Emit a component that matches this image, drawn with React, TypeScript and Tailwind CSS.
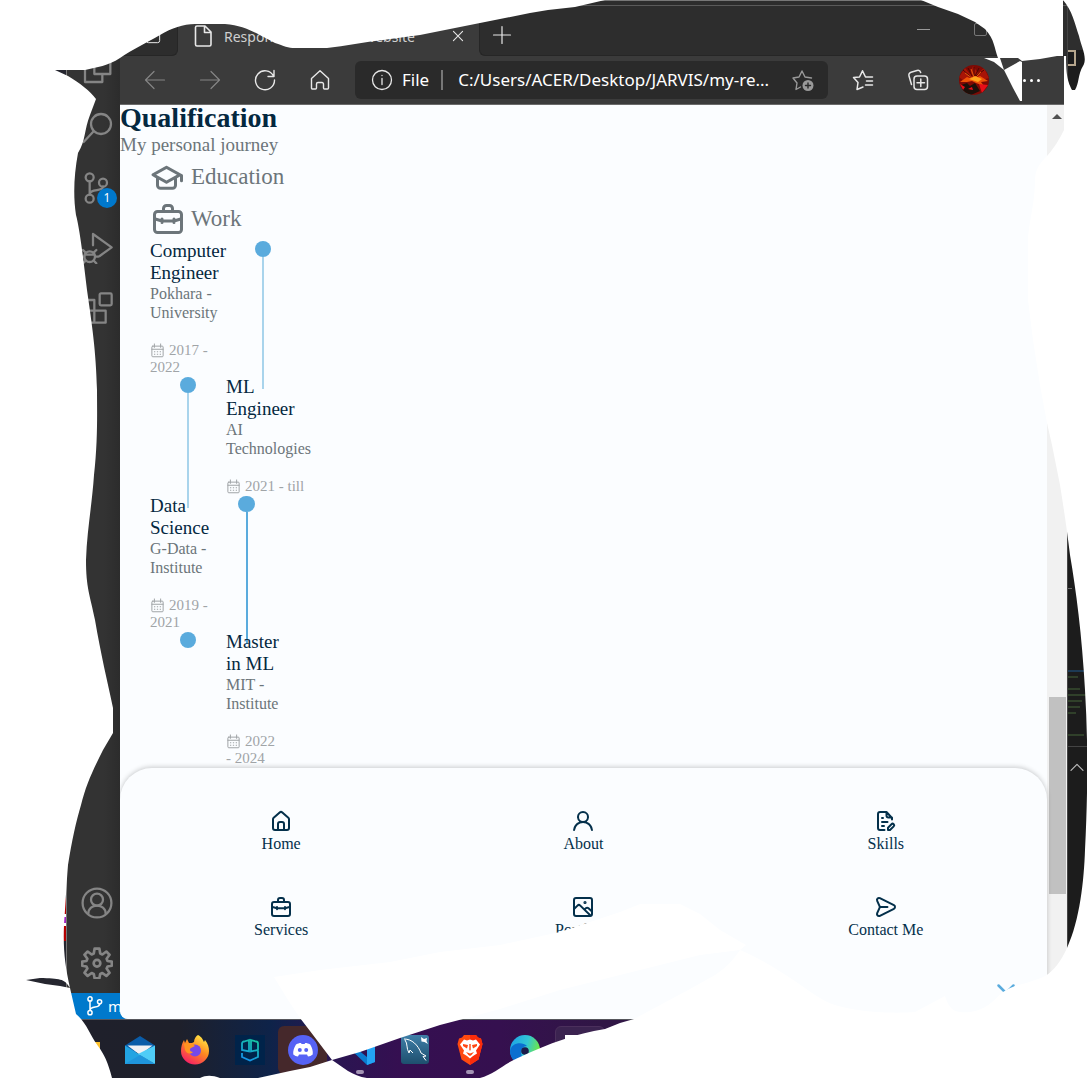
import React from "react";

type IconProps = { className?: string };

const UI_FONT = "font-['Noto_Sans',sans-serif]";

function Stroke({
  className = "size-6",
  width = 1.5,
  box = 24,
  children,
}: {
  className?: string;
  width?: number;
  box?: number;
  children: React.ReactNode;
}) {
  return (
    <svg
      viewBox={`0 0 ${box} ${box}`}
      className={`shrink-0 ${className}`}
      fill="none"
      stroke="currentColor"
      strokeWidth={width}
      strokeLinecap="round"
      strokeLinejoin="round"
      aria-hidden="true"
    >
      {children}
    </svg>
  );
}

function Solid({ className = "size-6", d }: { className?: string; d: string }) {
  return (
    <svg viewBox="0 0 24 24" className={`shrink-0 ${className}`} fill="currentColor" aria-hidden="true">
      <path d={d} />
    </svg>
  );
}

const HOME =
  "M20,8h0L14,2.74a3,3,0,0,0-4,0L4,8a3,3,0,0,0-1,2.26V19a3,3,0,0,0,3,3H18a3,3,0,0,0,3-3V10.25A3,3,0,0,0,20,8ZM14,20H10V15a1,1,0,0,1,1-1h2a1,1,0,0,1,1,1Zm5-1a1,1,0,0,1-1,1H16V15a3,3,0,0,0-3-3H11a3,3,0,0,0-3,3v5H6a1,1,0,0,1-1-1V10.25a1,1,0,0,1,.34-.75l6-5.25a1,1,0,0,1,1.32,0l6,5.25a1,1,0,0,1,.34.75Z";
const USER =
  "M15.71,12.71a6,6,0,1,0-7.42,0,10,10,0,0,0-6.22,8.18,1,1,0,0,0,2,.22,8,8,0,0,1,15.9,0,1,1,0,0,0,1,.89h.11a1,1,0,0,0,.88-1.1A10,10,0,0,0,15.71,12.71ZM12,12a4,4,0,1,1,4-4A4,4,0,0,1,12,12Z";
const SEND =
  "M20.34,9.32l-14-7a3,3,0,0,0-4.08,3.9l2.4,5.37h0a1.06,1.06,0,0,1,0,.82l-2.4,5.37A3,3,0,0,0,5,22a3.14,3.14,0,0,0,1.35-.32l14-7a3,3,0,0,0,0-5.36Zm-.89,3.57-14,7a1,1,0,0,1-1.35-1.3l2.39-5.37A2,2,0,0,0,6.57,13h6.89a1,1,0,0,0,0-2H6.57a2,2,0,0,0-.08-.22L4.1,5.41a1,1,0,0,1,1.35-1.3l14,7a1,1,0,0,1,0,1.78Z";
const CAP =
  "M21.49,10.19l-1-.55h0l-9-5h-.11a1.06,1.06,0,0,0-.19-.06l-.19,0-.18,0a1.17,1.17,0,0,0-.2.06l-.11,0-9,5a1,1,0,0,0,0,1.74L4,12.76V17.5a3,3,0,0,0,3,3h8a3,3,0,0,0,3-3V12.76l2-1.12V14.5a1,1,0,0,0,2,0V11.06A1,1,0,0,0,21.49,10.19ZM16,17.5a1,1,0,0,1-1,1H7a1,1,0,0,1-1-1V13.87l4.51,2.5.15.06.09,0a1,1,0,0,0,.25,0h0a1,1,0,0,0,.25,0l.09,0a.47.47,0,0,0,.15-.06L16,13.87Zm-5-3.14L4.06,10.5,11,6.64l6.94,3.86Z";

const Briefcase = ({ className }: IconProps) => (
  <Stroke className={className} width={2}>
    <rect x="3" y="7" width="18" height="14" rx="2" />
    <path d="M9 7V5a2 2 0 0 1 2-2h2a2 2 0 0 1 2 2v2M3.5 12l4.500 1.300h8l4.500-1.300M8 12v2.300M16 12v2.300" />
  </Stroke>
);
const Scenery = ({ className }: IconProps) => (
  <Stroke className={className} width={2}>
    <rect x="3" y="3" width="18" height="18" rx="2" />
    <path d="M3 14l3.500-3.400a2 2 0 0 1 2.800 0L19.500 20.500M13.500 14.500l1.300-1.200a2 2 0 0 1 2.700 0L21 16.500" />
    <circle cx="14" cy="7.500" r=".6" fill="currentColor" />
  </Stroke>
);
const FileEdit = ({ className }: IconProps) => (
  <Stroke className={className} width={2}>
    <path d="M10.500 21H6a2 2 0 0 1-2-2V5a2 2 0 0 1 2-2h6.500L18 9v1.500M12.500 3v3.500a2 2 0 0 0 2 2H18M8 9h1M8 13h5.500M8 17h2" />
    <path d="M14 21v-2.300l3.500-3.500a1.500 1.500 0 0 1 2.200 2.200L16 21z" />
  </Stroke>
);
const Calendar = ({ className }: IconProps) => (
  <Stroke className={className} width={1.6}>
    <path d="M4.500 5h15A1.500 1.500 0 0 1 21 6.500v14a1.500 1.500 0 0 1-1.500 1.500h-15A1.500 1.500 0 0 1 3 20.500v-14A1.500 1.500 0 0 1 4.500 5zM3 10h18M7 1.500V7M17 1.500V7M7 14h.8M11.600 14h.8M16.200 14h.8M7 18h.8M11.600 18h.8M16.200 18h.8" />
  </Stroke>
);

function IconButton({ label, className = "", children }: { label: string; className?: string; children: React.ReactNode }) {
  return (
    <button type="button" aria-label={label} className={`flex shrink-0 items-center justify-center ${className}`}>
      {children}
    </button>
  );
}

function ActivityBar() {
  return (
    <aside className="flex w-30 shrink-0 flex-col bg-[#333333]">
      <div className="flex flex-1">
        <div className="flex w-[66px] shrink-0 flex-col justify-end bg-[#25262f] pb-13">
          <div className="flex h-[43px] items-center justify-end bg-[#b40000]">
            <span className="h-3 w-0.5 border-y-3 border-white bg-[#a020c0]" />
          </div>
        </div>
        <div className="flex flex-1 flex-col items-center border-l border-[#777] bg-gradient-to-r from-[#333333] from-70% to-[#2c2c2c] pt-[50px] pl-[7px] text-[#858585]">
          <IconButton label="Explorer" className="h-10 w-11">
            <Stroke className="size-8" width={1.7}>
              <path d="M10 2h8l4 4v9H10zM10 7H3v14h13v-6" />
            </Stroke>
          </IconButton>
          <IconButton label="Search" className="mt-4 h-11 w-11">
            <Stroke className="size-8" width={1.7}>
              <circle cx="15" cy="9" r="7.500" />
              <path d="M9.500 14.500L2 22.500" />
            </Stroke>
          </IconButton>
          <button type="button" aria-label="Source control" className="relative mt-4 flex h-11 w-11 items-center justify-center">
            <Stroke className="size-8" width={1.7}>
              <circle cx="6.500" cy="4" r="3" />
              <circle cx="6.500" cy="20" r="3" />
              <circle cx="16.500" cy="8" r="3" />
              <path d="M6.500 7v10M16.500 11c0 4-10 1-10 6" />
            </Stroke>
            <span className="absolute right-0.5 bottom-0.5 flex size-5 items-center justify-center rounded-full bg-[#0078cc] font-['Noto_Sans',sans-serif] text-xs text-white">
              1
            </span>
          </button>
          <IconButton label="Run and debug" className="mt-4 h-11 w-11">
            <Stroke className="size-8" width={1.7}>
              <path d="M9 10V1.500L23 11.500l-9 6.500" />
              <circle cx="6.500" cy="18.500" r="4" />
              <path d="M3 17h7M1.500 13.500l2 2M11.500 13.500l-2 2M0 18.500h2.500M10.500 18.500H13M1.500 23.500l2-2M11.500 23.500l-2-2" />
            </Stroke>
          </IconButton>
          <IconButton label="Extensions" className="mt-4 h-11 w-11">
            <Stroke className="size-8" width={1.7}>
              <rect x="14" y="1" width="9" height="9" rx="1" />
              <path d="M2 6h8v17H2zM2 14h16.500v9H2z" />
            </Stroke>
          </IconButton>
          <div className="flex-1" />
          <IconButton label="Account" className="h-11 w-11">
            <Stroke className="size-8" width={1.7}>
              <circle cx="12" cy="12" r="10.800" />
              <circle cx="12" cy="9.500" r="4.500" />
              <path d="M5.500 20c0-8 13-8 13 0" />
            </Stroke>
          </IconButton>
          <IconButton label="Manage" className="mt-4 mb-2 h-11 w-11">
            <Stroke className="size-8" width={2}>
              <path d="M10.200 1.200h3.600l.6 3.700 1.600.7 3-2.200 2.400 2.400-2.200 3 .7 1.700 3.200.5v3l-3.200.6-.7 1.600 2.200 3.100-2.400 2.400-3-2.200-1.600.7-.6 3.300h-3.600l-.6-3.300-1.600-.7-3 2.200-2.400-2.400 2.200-3.100-.7-1.600L.9 14v-3l3.200-.5.7-1.700-2.200-3L5 3.400l3 2.200 1.600-.7z" />
              <circle cx="12" cy="12.200" r="2.500" />
            </Stroke>
          </IconButton>
        </div>
      </div>
      <div className={`flex h-[26px] items-center gap-[3px] bg-[#0079cc] pl-[85px] text-[15px] text-white ${UI_FONT}`}>
        <Stroke className="size-5" width={1.8}>
          <circle cx="6" cy="3.500" r="2.500" />
          <circle cx="6" cy="20" r="2.500" />
          <circle cx="17.500" cy="7" r="2.500" />
          <path d="M6 6v11.500M17.500 9.500c0 6-11.500 1-11.500 8" />
        </Stroke>
        <span>m</span>
      </div>
    </aside>
  );
}

function BrowserChrome() {
  return (
    <header className={`flex flex-col border-b border-[#6a6a6a] text-[#e8e8e8] ${UI_FONT}`}>
      <div className="border-t border-[#777] bg-[#3b3b3b]">
        <div className="flex h-[55px] items-end border-t-4 border-[#2d2d2d]">
          <div className="flex h-[51px] flex-1 items-end border-t border-[#5a5a5a] bg-[linear-gradient(#2d2d2d_0_8px,transparent_8px)]">
            <div className="flex h-[50px] w-[58px] items-center justify-end rounded-br-md border-r border-b border-[#262626] bg-[#2d2d2d] pt-2.5 pr-4">
              <Stroke className="size-4" width={1.5}>
                <rect x="2" y="2" width="20" height="20" rx="3" />
              </Stroke>
            </div>
            <div className="flex h-12 w-[301px] items-center rounded-t-md bg-[#3b3b3b] pt-2 pl-[13px]">
              <Stroke className="size-6" width={1.6}>
                <path d="M6 2h8l6 6v12.500a1.500 1.500 0 0 1-1.500 1.500H6A1.500 1.500 0 0 1 4.500 20.500v-17A1.500 1.500 0 0 1 6 2zM13.500 2v6.500H20" />
              </Stroke>
              <span className="ml-[9px] flex-1 text-[14px] whitespace-nowrap text-[#cfcfcf]">Responsive Portfolio Website</span>
              <IconButton label="Close tab" className="mr-[11px] size-5">
                <Stroke className="size-5" width={1.3}>
                  <path d="M6.500 6.500l11 11M17.500 6.500l-11 11" />
                </Stroke>
              </IconButton>
            </div>
            <div className="flex h-[50px] flex-1 items-end rounded-bl-md border-b border-l border-[#262626] bg-[#2d2d2d]">
              <IconButton label="New tab" className="h-12 w-11 pt-2">
                <Stroke className="size-6" width={1.2}>
                  <path d="M12 3.500v17M3.500 12h17" />
                </Stroke>
              </IconButton>
              <div className="flex-1" />
              <IconButton label="Minimize" className="h-12 w-14 pb-1">
                <span className="h-px w-[13px] bg-[#999]" />
              </IconButton>
              <IconButton label="Maximize" className="mr-[58px] h-12 w-[58px] pb-1">
                <span className="size-[13px] rounded-xs border border-[#777]" />
              </IconButton>
            </div>
          </div>
        </div>
      </div>
      <div className="flex h-12 items-center bg-[#3b3b3b] pl-2">
        <IconButton label="Back" className="h-10 w-[54px] text-[#858585]">
          <Stroke className="size-6" width={1.2}>
            <path d="M21.500 12H2.500M11 3.500L2.500 12l8.500 8.500" />
          </Stroke>
        </IconButton>
        <IconButton label="Forward" className="h-10 w-14 text-[#858585]">
          <Stroke className="size-6" width={1.2}>
            <path d="M2.500 12h19M13 3.500l8.500 8.500-8.500 8.500" />
          </Stroke>
        </IconButton>
        <IconButton label="Reload" className="h-10 w-[54px]">
          <Stroke className="size-6" width={1.4}>
            <path d="M20.500 8A9.500 9.500 0 1 0 21.500 12M21 2.500v6h-6" />
          </Stroke>
        </IconButton>
        <IconButton label="Home" className="h-10 w-14">
          <Stroke className="size-6" width={1.4}>
            <path d="M3.500 10.500L12 2.700l8.500 7.800v9.500a1 1 0 0 1-1 1h-3a1 1 0 0 1-1-1v-4a1.500 1.500 0 0 0-1.500-1.500h-4A1.500 1.500 0 0 0 8.500 16v4a1 1 0 0 1-1 1h-3a1 1 0 0 1-1-1z" />
          </Stroke>
        </IconButton>
        <div className="ml-[7px] flex h-[38px] max-w-[473px] flex-1 items-center rounded-md bg-[#2a2a2a] pl-[15px]">
          <Stroke className="size-6" width={1.3}>
            <circle cx="12" cy="12" r="9.500" />
            <path d="M12 10.500v6M12 7.500v.1" />
          </Stroke>
          <label htmlFor="address" className="ml-2 text-[17px] text-white">
            File
          </label>
          <span className="ml-3 h-5 w-0.5 bg-[#777]" />
          <input
            id="address"
            readOnly
            value="C:/Users/ACER/Desktop/JARVIS/my-re..."
            className="ml-[15px] min-w-0 flex-1 bg-transparent text-[17px] text-white outline-none"
          />
          <IconButton label="Add to favorites" className="mr-[11px] size-7 text-[#999]">
            <Stroke className="size-6" width={1.4}>
              <path d="M9.500 19L5 21.500l1-6.500L2 10l6-1L11 3l3 6 6.500 1" />
              <circle cx="17" cy="17.500" r="5.500" fill="currentColor" stroke="none" />
              <path d="M17 15v5M14.500 17.500h5" stroke="#2a2a2a" />
            </Stroke>
          </IconButton>
        </div>
        <IconButton label="Favorites" className="ml-[7px] h-10 w-14">
          <Stroke className="size-6" width={1.5}>
            <path d="M12 19l-6 2.500 1-7L2.500 9.500 8.500 9 11.500 2.800l3 6.200h7M15.500 13h6M14.500 17h7" />
          </Stroke>
        </IconButton>
        <IconButton label="Collections" className="h-10 w-[54px]">
          <Stroke className="size-6" width={1.5}>
            <rect x="8" y="8" width="13.500" height="13.500" rx="3" />
            <path d="M14.800 11v7.500M11 14.800h7.500M5.500 16.500L3 8a3 3 0 0 1 2-3.800l6-1.700a3 3 0 0 1 3.700 2" />
          </Stroke>
        </IconButton>
        <IconButton label="Profile" className="h-10 w-[58px]">
          <svg viewBox="0 0 30 30" className="size-[30px] rounded-full" aria-hidden="true">
            <rect width="30" height="30" fill="#7e0a04" />
            <path d="M0 12L6 3l5 6 3-8 5 7 6-5 5 10-7 2-8-1-9 3z" fill="#a81406" />
            <path d="M1 17l7-5 5 2 8-3 8 5-7 1 3 4-8-3-4-2-5 1z" fill="#ee5208" />
            <path d="M10 14l6-3 7 3-4 3z" fill="#ffa51c" />
            <path d="M2 20l6-2 3 3 5-3 5 8-9 4-8-3z" fill="#1c100a" />
            <path d="M1 19l5 3-2 3zM20 19l9 1-6 8zM9 24l4-2 1 3z" fill="#e80e18" />
            <path d="M4 5l8 7M25 5l-8 6M15 2v9M9 3l4 8M20 3l-4 8" stroke="#4c0602" />
            <path d="M6 8l7 5M22 7l-5 5M12 4l3 8" stroke="#ff7a10" strokeWidth=".7" />
          </svg>
        </IconButton>
        <IconButton label="Settings and more" className="h-10 w-14 gap-1">
          <span className="size-[3px] rounded-full bg-white" />
          <span className="size-[3px] rounded-full bg-white" />
          <span className="size-[3px] rounded-full bg-white" />
        </IconButton>
      </div>
    </header>
  );
}

type Entry = {
  title: string[];
  place: string[];
  date: string[];
  side: "left" | "right";
  dotCell: string;
  dot: string;
  line: string;
};

const ENTRIES: Entry[] = [
  {
    title: ["Computer", "Engineer"],
    place: ["Pokhara -", "University"],
    date: ["2017 -", "2022"],
    side: "left",
    dotCell: "w-[74px]",
    dot: "w-4",
    line: "w-0.5 bg-[#a9d4ec]",
  },
  {
    title: ["ML", "Engineer"],
    place: ["AI", "Technologies"],
    date: ["2021 - till"],
    side: "right",
    dotCell: "w-[76px]",
    dot: "w-4",
    line: "w-0.5 bg-[#a9d4ec]",
  },
  {
    title: ["Data", "Science"],
    place: ["G-Data -", "Institute"],
    date: ["2019 -", "2021"],
    side: "left",
    dotCell: "w-[41px]",
    dot: "w-[17px]",
    line: "w-0.5 bg-[#5aabdd]",
  },
  {
    title: ["Master", "in ML"],
    place: ["MIT -", "Institute"],
    date: ["2022", "- 2024"],
    side: "right",
    dotCell: "w-[76px]",
    dot: "w-4",
    line: "",
  },
];

function lines(parts: string[]) {
  return parts.map((p) => (
    <span key={p} className="block whitespace-nowrap">
      {p}
    </span>
  ));
}

function TimelineEntry({ entry }: { entry: Entry }) {
  const text = (
    <div className="w-[76px]">
      <h3 className="text-[19px] leading-[22px] text-[#04283f]">{lines(entry.title)}</h3>
      <p className="text-base leading-[19px] text-[#6c757a]">{lines(entry.place)}</p>
      <div className="mt-5 text-[15px] leading-[17px] text-[#a0a4a7]">
        <span className="flex items-center gap-1 whitespace-nowrap">
          <Calendar className="size-[15px]" />
          {entry.date[0]}
        </span>
        {lines(entry.date.slice(1))}
      </div>
    </div>
  );
  const marker = (
    <div className={`flex flex-col items-center pt-px ${entry.dotCell}`}>
      <span className={`h-4 shrink-0 rounded-full bg-[#5aabdd] ${entry.dot}`} />
      {entry.line && <span className={`-mb-[13px] flex-1 ${entry.line}`} />}
    </div>
  );
  return (
    <li className="flex">
      {entry.side === "left" ? text : marker}
      {entry.side === "left" ? marker : text}
    </li>
  );
}

const NAV = [
  { label: "Home", icon: <Solid d={HOME} /> },
  { label: "About", icon: <Solid d={USER} /> },
  { label: "Skills", icon: <FileEdit className="size-6" /> },
  { label: "Services", icon: <Briefcase className="size-6" /> },
  { label: "Portfolio", icon: <Scenery className="size-6" /> },
  { label: "Contact Me", icon: <Solid d={SEND} /> },
];

function Page() {
  return (
    <div className="flex flex-1 font-['Liberation_Serif',serif]">
      <main className="flex min-w-0 flex-1 flex-col bg-[#fbfdff]">
        <section className="flex-1">
          <h2 className="text-[28px] leading-[26px] font-bold text-[#04283f]">Qualification</h2>
          <p className="text-[19px] leading-7 text-[#6c757a]">My personal journey</p>
          <div className="flex flex-col items-start gap-1.5 pl-[30px] text-[23px] text-[#6c757a]">
            <button type="button" className="flex h-9 items-center gap-[5px]">
              <Solid className="size-9" d={CAP} />
              Education
            </button>
            <button type="button" className="flex h-9 items-center gap-[5px]">
              <Briefcase className="size-9" />
              Work
            </button>
          </div>
          <ul className="mt-[3px] pl-[30px]">
            {ENTRIES.map((e) => (
              <TimelineEntry key={e.title[0]} entry={e} />
            ))}
          </ul>
        </section>
        <nav className="relative grid grid-cols-3 gap-y-10 rounded-t-[32px] rounded-bl-lg bg-[#fbfdff] px-[10px] pt-[41px] pb-[78px] shadow-[0_-1px_5px_rgba(0,0,0,0.2)]">
          {NAV.map((n) => (
            <a key={n.label} href="#" className="flex flex-col items-center text-base leading-[22px] text-[#04304b]">
              {n.icon}
              {n.label}
            </a>
          ))}
          <a href="#" aria-label="Close menu" className="absolute right-[29px] bottom-3.5 text-[#5aabdd]">
            <Stroke className="size-6" width={2.5}>
              <path d="M4.500 4.500l15 15M19.500 4.500l-15 15" />
            </Stroke>
          </a>
        </nav>
      </main>
      <div className="flex w-5 shrink-0 flex-col items-center bg-[#f1f1f1]">
        <span className="mt-[9px] border-x-[5px] border-b-[5px] border-x-transparent border-b-[#505050]" />
        <span className="flex-578" />
        <span className="w-[17px] flex-197 bg-[#c1c1c1]" />
        <span className="flex-125" />
      </div>
    </div>
  );
}

function EditorEdge() {
  return (
    <aside className="flex w-5 shrink-0 flex-col overflow-hidden border-l border-[#444] bg-[#1c1c1c]">
      <div className="h-[50px] bg-[#2e2e2e]" />
      <span className="-ml-1 h-4 w-3 border-2 border-[#b5a58c]" />
      <div className="flex-521" />
      <div className="h-px w-1 bg-[#666]" />
      <div className="flex-81" />
      <div className="h-0.5 bg-[#1d3a55]" />
      <div className="mt-1 flex flex-col gap-1 *:h-0.5 *:bg-[#30402a]">
        <span className="w-2.5" />
        <span className="mt-1.5 w-3" />
        <span className="w-5" />
        <span className="w-3.5" />
        <span className="w-3" />
        <span className="w-2" />
        <span className="mt-4 w-4" />
      </div>
      <div className="mt-2.5 h-px bg-[#444]" />
      <div className="flex h-10 items-center pl-px text-[#bbb]">
        <Stroke className="size-4" width={1.8}>
          <path d="M3 17l9-9 9 9" />
        </Stroke>
      </div>
      <div className="flex-231" />
    </aside>
  );
}

function Taskbar() {
  const item = "flex h-12 w-[55px] shrink-0 items-center justify-center";
  return (
    <footer className="flex h-[59px] items-center overflow-hidden border-t border-[#55565c] bg-[linear-gradient(90deg,#20202b_0,#1e202b_180px,#0e2349_270px,#291652_330px,#350f51_400px,#35104f_500px,#301645_600px,#301645_100%)] pt-0.5 pl-[57px]">
      <IconButton label="Files" className={item}>
        <svg viewBox="0 0 30 30" className="size-[30px]" aria-hidden="true">
          <path d="M0 4h12l3 3h15v20H0z" fill="#fbc02d" />
        </svg>
      </IconButton>
      <IconButton label="Mail" className={item}>
        <svg viewBox="0 0 30 30" className="size-[30px]" aria-hidden="true">
          <path d="M0 10.500L15 1l15 9.500V17H0z" fill="#0a5ca8" />
          <path d="M2.500 10.500h25L15 20z" fill="#f1f1f4" />
          <path d="M0 10.500l30 18.500H0z" fill="#22a4e2" />
          <path d="M30 10.500V29L13 19z" fill="#4fcdf7" />
          <path d="M0 29l15-9 15 9z" fill="#1f95dc" />
        </svg>
      </IconButton>
      <IconButton label="Firefox" className={item}>
        <svg viewBox="0 0 30 30" className="size-[30px]" aria-hidden="true">
          <defs>
            <linearGradient id="fx" x1=".8" y1="0" x2=".2" y2="1">
              <stop offset="0" stopColor="#fff04a" />
              <stop offset=".45" stopColor="#ff8a1f" />
              <stop offset="1" stopColor="#f5156c" />
            </linearGradient>
          </defs>
          <path d="M18 0c4 2 5 5 6 7l1-2c3 4 4 7 4 11a14 13.500 0 0 1-28 0C1 12 2 8 4 5l1 3 2-4 2 4h3l2-1c0-3 2-6 4-7z" fill="url(#fx)" />
          <circle cx="15" cy="15.500" r="6" fill="#7549e8" />
          <path d="M4 9c4-2 8-1 11 2l-4 2c-2 1-1 4 2 4-3 3-7 1-8-2z" fill="#ff9420" />
        </svg>
      </IconButton>
      <IconButton label="Planner" className={item}>
        <svg viewBox="0 0 30 30" className="size-[30px]" fill="none" strokeWidth="1.800" aria-hidden="true">
          <defs>
            <linearGradient id="pl" gradientUnits="userSpaceOnUse" x1="20" y1="4" x2="8" y2="26">
              <stop offset="0" stopColor="#17c6a0" />
              <stop offset="1" stopColor="#158cf0" />
            </linearGradient>
          </defs>
          <rect width="30" height="30" fill="#00234a" />
          <path
            d="M14 5L9 6.500a2 2 0 0 0-2 2V15l7 1.500zM16 5l5 1.500a2 2 0 0 1 2 2V15l-7 1.500zM7 18v4l8 3.500 8-3.500v-8"
            stroke="url(#pl)"
          />
        </svg>
      </IconButton>
      <IconButton label="Discord" className={`${item} pr-1`}>
        <span className="flex h-12 w-[49px] items-center justify-center rounded-md bg-[#45282b]">
          <svg viewBox="0 0 30 30" className="size-[30px]" aria-hidden="true">
            <circle cx="15" cy="15" r="15" fill="#5662f5" />
            <path
              d="M8 9.500c2-1 3-1.500 5-1.500l.6 1h3l.6-1c2 0 3 .5 5 1.500 2 3 3 7 2.500 10-1.500 1.200-3 2-4.700 2l-1-2h-8l-1 2c-1.700 0-3.200-.8-4.700-2-.500-3 .7-7 2.700-10z"
              fill="#fff"
            />
            <circle cx="11.800" cy="15" r="2" fill="#5662f5" />
            <circle cx="18.200" cy="15" r="2" fill="#5662f5" />
          </svg>
        </span>
      </IconButton>
      <IconButton label="Visual Studio Code" className={`${item} relative`}>
        <svg viewBox="0 0 30 30" className="size-[30px]" aria-hidden="true">
          <path d="M22 0l8 3v24l-8 3L3 12l-3-2 3-3 19 15z" fill="#0a7bcf" />
          <path d="M22 0l8 3v24l-8 3z" fill="#23a3f4" />
        </svg>
        <span className="absolute bottom-0 h-1 w-2 rounded-full bg-[#a393b4]" />
      </IconButton>
      <IconButton label="MySQL Workbench" className={item}>
        <svg viewBox="0 0 30 30" className="size-[30px]" aria-hidden="true">
          <defs>
            <linearGradient id="ms" x1="0" y1="0" x2="0" y2="1">
              <stop offset="0" stopColor="#3f7fa8" />
              <stop offset="1" stopColor="#1e4f6e" />
            </linearGradient>
          </defs>
          <rect x="1" y="0" width="28" height="29" rx="3" fill="url(#ms)" />
          <path d="M4 4c8 0 14 6 17 14l5 3-3 .5 3 4M5 5c3 4 1 8 4 13l1-3 3 3" stroke="#fff" strokeWidth="1" fill="none" />
          <path d="M21 2l3 2 3-1-.5 3 1.500 3-3.500-2-3-.500z" fill="#fff" />
        </svg>
      </IconButton>
      <IconButton label="Brave" className={`${item} relative`}>
        <svg viewBox="0 0 30 30" className="size-[30px]" aria-hidden="true">
          <path d="M9 0h12l2 2.500 3 1L27.500 9l-.5 2-3.500 13.500L15 30l-8.500-5.500L3 11l-.500-2L4 3.500l3-1z" fill="#ff4a10" />
          <path d="M15 0h6l2 2.500 3 1L27.500 9l-.5 2-3.500 13.500L15 30z" fill="#fb2c0b" />
          <path d="M9 4.500l3 1 3-1 3 1 3-1 4 5-4 6 1 3-4 2.500-3 2.500-3-2.500L8 18.500l1-3-4-6z" fill="#fff" />
          <path d="M8 9l5 1-1 3.500L8 11zM22 9l-5 1 1 3.500 4-2.500zM11 17l4 1.500 4-1.500-2.500 3L15 21l-1.500-1zM14.300 9h1.400v6l-.7.8-.7-.8z" fill="#ff4713" />
        </svg>
        <span className="absolute bottom-0 h-1 w-2 rounded-full bg-[#a393b4]" />
      </IconButton>
      <IconButton label="Edge" className={item}>
        <svg viewBox="0 0 30 30" className="size-[30px]" aria-hidden="true">
          <defs>
            <linearGradient id="ed" x1="0" y1="0" x2="1" y2=".3">
              <stop offset="0" stopColor="#1b9fe8" />
              <stop offset=".6" stopColor="#32c6d4" />
              <stop offset="1" stopColor="#6be64a" />
            </linearGradient>
          </defs>
          <circle cx="15" cy="15" r="15" fill="url(#ed)" />
          <path d="M0 16C1 8 12 6 17 11c-5 0-8 6-4 12l4 7C8 31 0 25 0 16z" fill="#0b6fd0" />
          <circle cx="15" cy="16" r="3.800" fill="#1c1b4a" />
        </svg>
      </IconButton>
      <IconButton label="Edge window" className="ml-[3px] h-12 w-[50px] shrink-0 rounded-md border border-[#4b2f5c] bg-[#3b2350]">
        <span className="size-[30px] bg-white" />
      </IconButton>
    </footer>
  );
}

/* White paper around the ragged edges, with the visible area cut out of it. */
const PAPER = [
  "M0 0H1087V1078H0Z",
  "M55 70L85 70 C97 67 108 66 120 58 C133 49 146 43 160 35 C172 28 183 24 195 24 L225 24 C248 26 258 35 275 43 C284 46 288 48 295 48 L327 48 C345 46 365 42 383 40 L420 35 455 28 480 23 500 19 530 13 548 10 575 7 605 0 921 0 938 7 958 14 975 22 985 29 C995 40 994 48 998 58 L1018 58 1022 61 1040 59 1057 56 1064 56 1064 130 C1060 138 1055 147 1047 156 C1040 163 1036 168 1035 178 C1035 205 1029 220 1028 240 L1028 300 1033 340 1040 385 1047 423 1052 445 1060 485 C1064 510 1067 530 1070 555 C1076 590 1082 635 1085 690 C1088 740 1088 790 1085 850 C1084 880 1080 920 1067 948 C1061 961 1054 971 1045 976 C1032 983 1015 984 1003 992 C993 1001 986 1010 970 1012 C955 1013 950 1011 945 996 L915 1012 C890 1014 840 1012 820 998 C798 984 775 965 740 950 C733 960 726 968 715 975 L690 989 634 1019 620 1023 605 1029 C575 1034 550 1043 520 1057 C503 1064 495 1074 480 1078 L367 1078 C352 1076 343 1067 332 1060 L310 1067 290 1071 258 1078 220 1078 C212 1075 206 1075 200 1078 L112 1078 C108 1062 104 1054 98 1046 C90 1035 86 1022 76 1014 L70 988 C64 978 60 979 40 978 L26 980 45 984 60 986 70 988 C65 965 63 950 64 925 C66 900 66 890 68 865 C72 840 76 822 81 805 C86 785 92 772 103 750 L113 733 113 708 C107 680 101 655 95 620 C90 595 86 588 86 560 C87 530 92 505 94 475 C98 440 97 410 97 390 C96 350 92 325 87 290 C84 265 80 230 76 215 C73 195 74 175 78 153 C86 140 84 130 90 115 L96 99 C90 91 80 83 68 76Z",
  "M1063 0C1072 10 1075 24 1079 36 C1081 46 1088 58 1083 66 C1078 74 1079 84 1075 90 L1072 90 C1068 82 1066 76 1066 56 L1063 56Z",
].join("");

function TornPaper() {
  return (
    <svg
      viewBox="0 0 1087 1078"
      preserveAspectRatio="none"
      className="pointer-events-none absolute inset-0 size-full"
      fill="#fff"
      aria-hidden="true"
    >
      <path d={PAPER} fillRule="evenodd" />
      <path d="M984 58H1000L1004 70 994 62ZM1020 61L1022 62V101H1020L1013 88 1004 70Z" />
      <path d="M274 977L320 970 390 962 440 952 500 945 560 932 590 922 620 912 640 904 680 904 700 914 720 930 746 945 740 950 700 955 640 970 560 990 500 1009 463 1019 440 1025 400 1038 360 1052 332 1060 310 1031 300 1018 288 1000Z" />
    </svg>
  );
}

export default function App() {
  return (
    <div className="relative flex min-h-screen flex-col overflow-hidden bg-white">
      <div className="flex flex-1 bg-[#0079cc]">
        <ActivityBar />
        <div className="flex min-w-0 flex-1 flex-col overflow-hidden rounded-bl-lg">
          <BrowserChrome />
          <Page />
        </div>
        <EditorEdge />
      </div>
      <Taskbar />
      <TornPaper />
    </div>
  );
}
